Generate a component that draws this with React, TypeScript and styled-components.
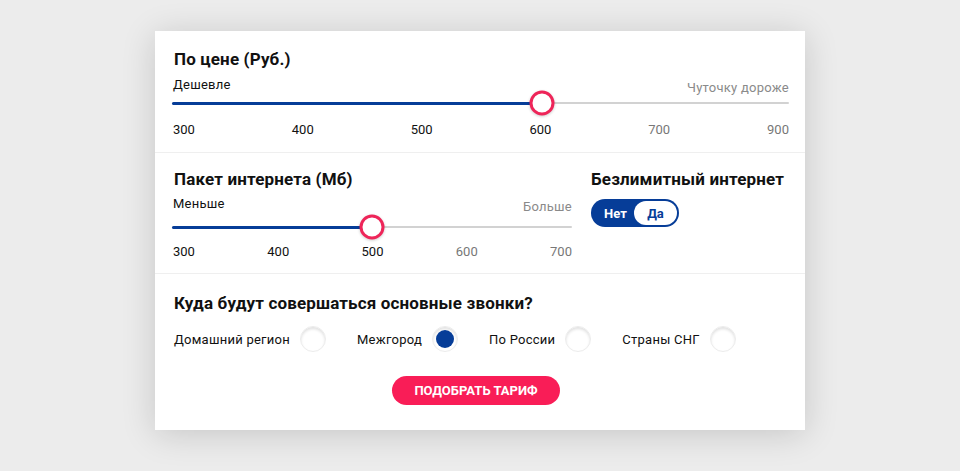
import styled, { createGlobalStyle } from "styled-components";

const BLUE = "#063d98";
const PINK = "#f91d57";

const GlobalStyle = createGlobalStyle`
  html, body {
    margin: 0;
    padding: 0;
    background: #ececec;
  }
  body {
    font-family: Roboto, "Noto Sans", sans-serif;
    color: #111;
  }
`;

const Page = styled.div`
  display: flex;
  justify-content: center;
  align-items: flex-start;
  padding-top: 31px;
  min-height: 471px;
  box-sizing: border-box;
`;

const Card = styled.div`
  width: 650px;
  background: #fff;
  box-shadow: 0 4px 32px rgba(0, 0, 0, 0.16);
`;

const Section = styled.section<{ $top: number; $bottom: number }>`
  padding: ${(p) => p.$top}px 16px ${(p) => p.$bottom}px 17px;
  & + & {
    border-top: 1px solid #efefef;
  }
`;

const Title = styled.h2`
  margin: 0 0 0 2px;
  font-size: 17px;
  line-height: 22px;
  font-weight: 700;
  letter-spacing: 0.15px;
`;

const EdgeLabels = styled.div<{ $mt: number }>`
  display: flex;
  justify-content: space-between;
  align-items: flex-start;
  height: 16px;
  margin-top: ${(p) => p.$mt}px;
  margin-left: 1px;
`;

const EdgeLabel = styled.span<{ $muted?: boolean }>`
  font-size: 13px;
  line-height: 16px;
  letter-spacing: 0.25px;
  color: ${(p) => (p.$muted ? "#8a8a8a" : "#111")};
  margin-top: ${(p) => (p.$muted ? 3 : 0)}px;
`;

const Track = styled.div<{ $mt: number }>`
  position: relative;
  height: 22px;
  margin-top: ${(p) => p.$mt}px;

  &::before {
    content: "";
    position: absolute;
    left: 0;
    right: 0;
    top: 10px;
    height: 2px;
    background: #d2d2d2;
    border-radius: 1px;
  }
`;

const Fill = styled.div`
  position: absolute;
  left: 0;
  top: 10px;
  height: 3px;
  background: ${BLUE};
  border-radius: 2px;
`;

const Thumb = styled.div`
  position: absolute;
  top: 11px;
  width: 25px;
  height: 25px;
  box-sizing: border-box;
  border: 3px solid #ee2559;
  border-radius: 50%;
  background: #fff;
  transform: translate(-50%, -50%);
  box-shadow: 0 1px 3px rgba(0, 0, 0, 0.2);
`;

const Ticks = styled.div<{ $mt: number }>`
  display: flex;
  justify-content: space-between;
  margin-top: ${(p) => p.$mt}px;
  margin-left: 1px;
`;

const Tick = styled.span<{ $muted?: boolean }>`
  font-size: 13px;
  line-height: 16px;
  color: ${(p) => (p.$muted ? "#777" : "#111")};
`;

const TwoCols = styled.div`
  display: grid;
  grid-template-columns: 400px 1fr;
  column-gap: 19px;
`;

const Column = styled.div<{ $stretch?: boolean }>`
  display: flex;
  flex-direction: column;
  align-items: ${(p) => (p.$stretch ? "stretch" : "flex-start")};
`;

const SideTitle = styled(Title)`
  margin-left: 0;
`;

const Toggle = styled.div`
  display: flex;
  align-items: center;
  width: 88px;
  height: 28px;
  margin-top: 9px;
  padding: 2px;
  box-sizing: border-box;
  border-radius: 14px;
  background: ${BLUE};
`;

const ToggleOption = styled.span<{ $on?: boolean }>`
  flex: ${(p) => (p.$on ? "0 0 43px" : "1")};
  height: 24px;
  display: flex;
  align-items: center;
  justify-content: center;
  border-radius: 12px;
  font-size: 13px;
  font-weight: 700;
  color: ${(p) => (p.$on ? BLUE : "#fff")};
  background: ${(p) => (p.$on ? "#fff" : "transparent")};
  padding-left: ${(p) => (p.$on ? 0 : 4)}px;
`;

const RadioRow = styled.div`
  display: flex;
  align-items: center;
  gap: 31px;
  margin-top: 12px;
  margin-left: 2px;
  height: 26px;
`;

const RadioItem = styled.label`
  display: flex;
  align-items: center;
  gap: 10px;
  font-size: 13px;
  letter-spacing: 0.25px;
  color: #111;
`;

const RadioCircle = styled.span<{ $checked?: boolean }>`
  position: relative;
  width: 26px;
  height: 26px;
  box-sizing: border-box;
  border-radius: 50%;
  background: #fff;
  border: 1px solid #ececec;
  box-shadow: inset 0 2px 3px rgba(0, 0, 0, 0.12);

  &::after {
    content: "";
    display: ${(p) => (p.$checked ? "block" : "none")};
    position: absolute;
    left: 3px;
    top: 3px;
    width: 18px;
    height: 18px;
    border-radius: 50%;
    background: ${BLUE};
  }
`;

const Actions = styled.div`
  display: flex;
  justify-content: center;
  margin-top: 24px;
  padding-right: 9px;
`;

const Button = styled.button`
  height: 29px;
  padding: 0 22px;
  border: none;
  border-radius: 15px;
  background: ${PINK};
  color: #fff;
  font-family: Roboto, "Noto Sans", sans-serif;
  font-size: 13px;
  font-weight: 700;
  text-transform: uppercase;
  cursor: pointer;
`;

type SliderProps = {
  min: string;
  max: string;
  ticks: number[];
  index: number;
  labelGap: number;
  trackGap: number;
  tickGap: number;
};

const Slider = ({ min, max, ticks, index, labelGap, trackGap, tickGap }: SliderProps) => {
  const pos = (index / (ticks.length - 1)) * 100;
  return (
    <>
      <EdgeLabels $mt={labelGap}>
        <EdgeLabel>{min}</EdgeLabel>
        <EdgeLabel $muted>{max}</EdgeLabel>
      </EdgeLabels>
      <Track $mt={trackGap}>
        <Fill style={{ width: `${pos}%` }} />
        <Thumb style={{ left: `${pos}%` }} />
      </Track>
      <Ticks $mt={tickGap}>
        {ticks.map((t, i) => (
          <Tick key={t} $muted={i > index}>
            {t}
          </Tick>
        ))}
      </Ticks>
    </>
  );
};

const destinations = [
  { label: "Домашний регион", checked: false },
  { label: "Межгород", checked: true },
  { label: "По России", checked: false },
  { label: "Страны СНГ", checked: false },
];

export default function App() {
  return (
    <>
      <GlobalStyle />
      <Page>
        <Card>
          <Section $top={17} $bottom={14}>
            <Title>По цене (Руб.)</Title>
            <Slider
              min="Дешевле"
              max="Чуточку дороже"
              ticks={[300, 400, 500, 600, 700, 900]}
              index={3}
              labelGap={7}
              trackGap={-1}
              tickGap={8}
            />
          </Section>

          <Section $top={15} $bottom={13}>
            <TwoCols>
              <Column $stretch>
                <Title>Пакет интернета (Мб)</Title>
                <Slider
                  min="Меньше"
                  max="Больше"
                  ticks={[300, 400, 500, 600, 700]}
                  index={2}
                  labelGap={6}
                  trackGap={4}
                  tickGap={6}
                />
              </Column>
              <Column>
                <SideTitle>Безлимитный интернет</SideTitle>
                <Toggle>
                  <ToggleOption>Нет</ToggleOption>
                  <ToggleOption $on>Да</ToggleOption>
                </Toggle>
              </Column>
            </TwoCols>
          </Section>

          <Section $top={18} $bottom={25}>
            <Title>Куда будут совершаться основные звонки?</Title>
            <RadioRow>
              {destinations.map((d) => (
                <RadioItem key={d.label}>
                  {d.label}
                  <RadioCircle $checked={d.checked} />
                </RadioItem>
              ))}
            </RadioRow>
            <Actions>
              <Button>Подобрать тариф</Button>
            </Actions>
          </Section>
        </Card>
      </Page>
    </>
  );
}
